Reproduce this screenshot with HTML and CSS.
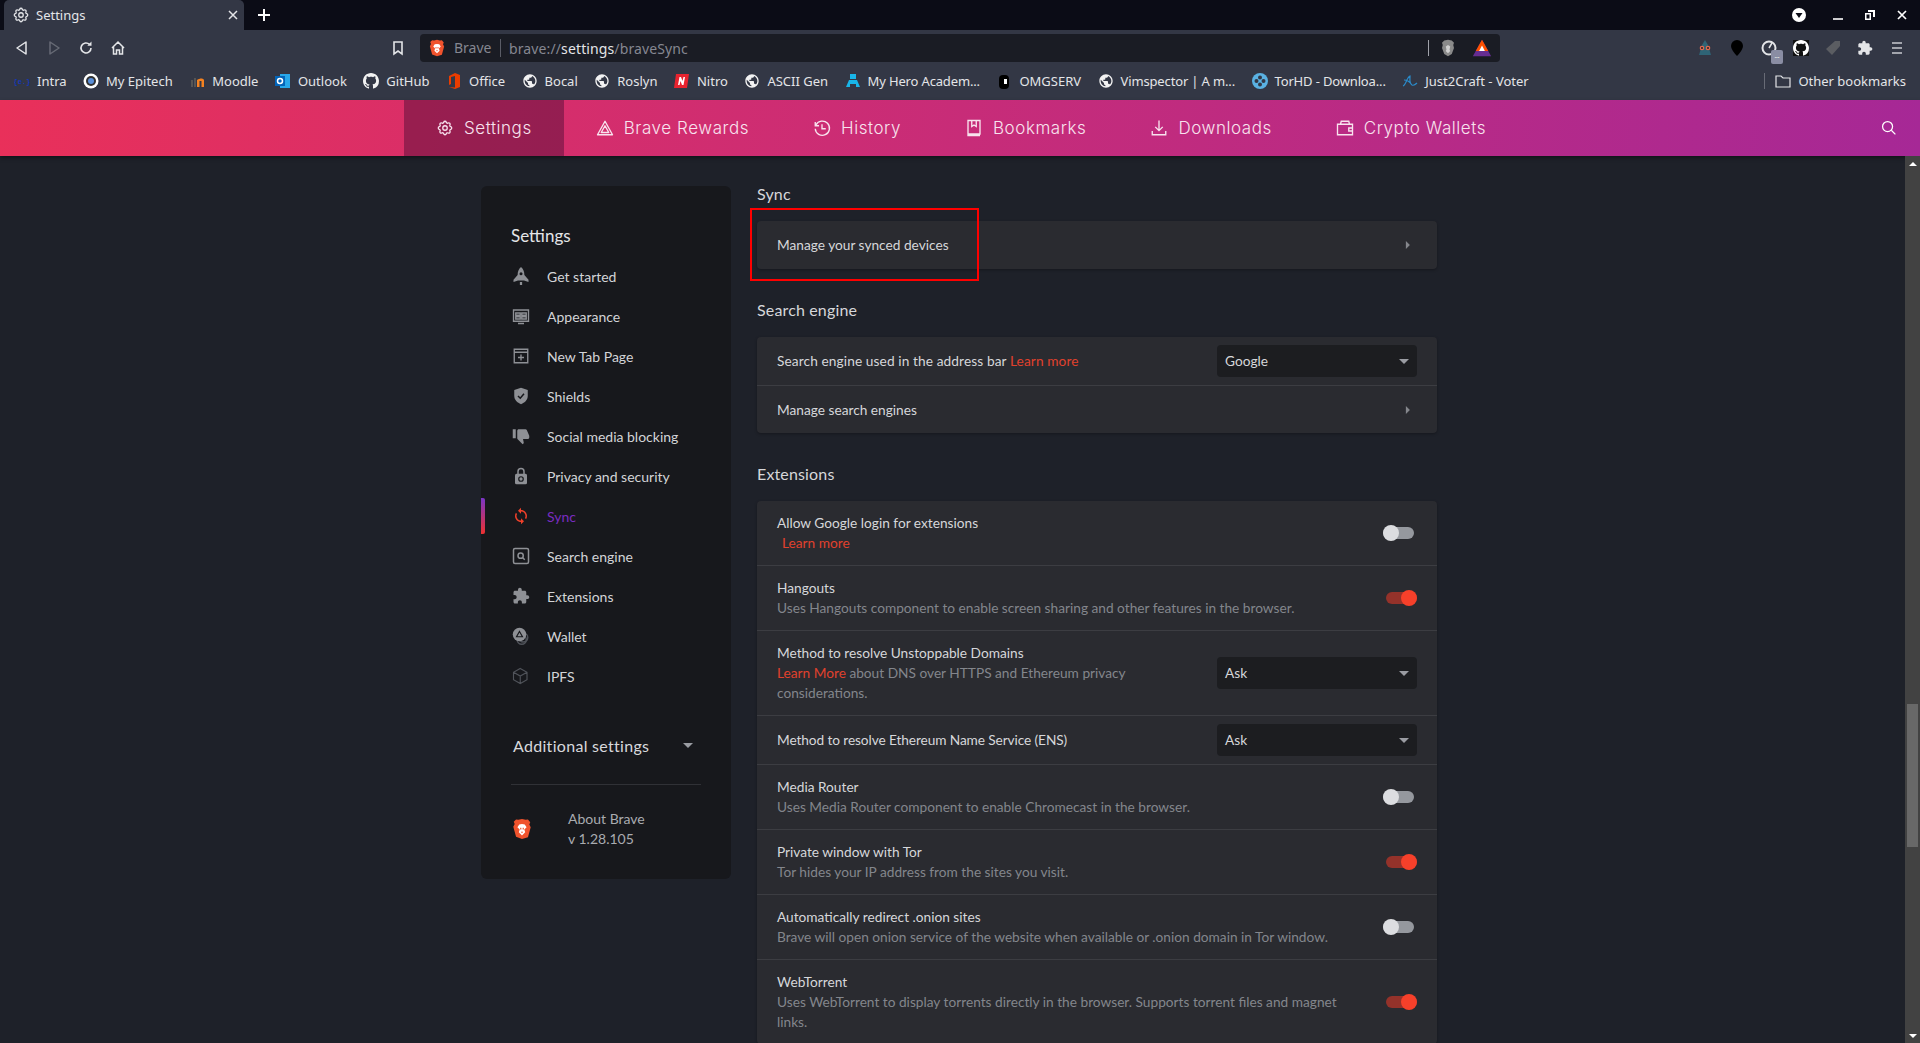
FILE: index.html
```html
<!DOCTYPE html>
<html lang="en">
<head>
    <meta charset="UTF-8">
    <title>Settings</title>
    <link rel="stylesheet" href="styles.css">
</head>
<body>
    <!-- shared icons -->
    <svg class="sprite" xmlns="http://www.w3.org/2000/svg">
        <symbol id="gear" viewBox="0 0 24 24"><path fill="none" stroke="currentColor" stroke-width="1.7" d="M10.325 4.317c.426-1.756 2.924-1.756 3.35 0a1.724 1.724 0 002.573 1.066c1.543-.94 3.31.826 2.37 2.37a1.724 1.724 0 001.065 2.572c1.756.426 1.756 2.924 0 3.35a1.724 1.724 0 00-1.066 2.573c.94 1.543-.826 3.31-2.37 2.37a1.724 1.724 0 00-2.572 1.065c-.426 1.756-2.924 1.756-3.35 0a1.724 1.724 0 00-2.573-1.066c-1.543.94-3.31-.826-2.37-2.37a1.724 1.724 0 00-1.065-2.572c-1.756-.426-1.756-2.924 0-3.35a1.724 1.724 0 001.066-2.573c-.94-1.543.826-3.31 2.37-2.37.996.608 2.296.07 2.572-1.065z"/><circle cx="12" cy="12" r="3" fill="none" stroke="currentColor" stroke-width="1.7"/></symbol>
        <symbol id="globe" viewBox="0 0 24 24"><circle cx="12" cy="12" r="10" fill="#333745"/><path fill="#f2f2f2" d="M12 2C6.48 2 2 6.48 2 12s4.48 10 10 10 10-4.48 10-10S17.52 2 12 2zm-1 17.93c-3.95-.49-7-3.85-7-7.93 0-.62.08-1.21.21-1.79L9 15v1c0 1.1.9 2 2 2v1.93zm6.9-2.54c-.26-.81-1-1.39-1.9-1.39h-1v-3c0-.55-.45-1-1-1H8v-2h2c.55 0 1-.45 1-1V7h2c1.1 0 2-.9 2-2v-.41c2.93 1.19 5 4.06 5 7.41 0 2.08-.8 3.97-2.1 5.39z"/></symbol>
        <symbol id="github" viewBox="0 0 16 16"><path fill="currentColor" d="M8 0C3.58 0 0 3.58 0 8c0 3.54 2.29 6.53 5.47 7.59.4.07.55-.17.55-.38 0-.19-.01-.82-.01-1.49-2.01.37-2.53-.49-2.69-.94-.09-.23-.48-.94-.82-1.13-.28-.15-.68-.52-.01-.53.63-.01 1.08.58 1.23.82.72 1.21 1.87.87 2.33.66.07-.52.28-.87.51-1.07-1.78-.2-3.64-.89-3.64-3.95 0-.87.31-1.59.82-2.15-.08-.2-.36-1.02.08-2.12 0 0 .67-.21 2.2.82.64-.18 1.32-.27 2-.27.68 0 1.36.09 2 .27 1.53-1.04 2.2-.82 2.2-.82.44 1.1.16 1.92.08 2.12.51.56.82 1.27.82 2.15 0 3.07-1.87 3.75-3.65 3.95.29.25.54.73.54 1.48 0 1.07-.01 1.93-.01 2.2 0 .21.15.46.55.38A8.013 8.013 0 0016 8c0-4.42-3.58-8-8-8z"/></symbol>
        <symbol id="puzzle" viewBox="0 0 24 24"><path fill="currentColor" d="M20.5 11H19V7c0-1.1-.9-2-2-2h-4V3.5C13 2.12 11.88 1 10.5 1S8 2.12 8 3.5V5H4c-1.1 0-1.99.9-1.99 2v3.8H3.5c1.49 0 2.7 1.21 2.7 2.7s-1.21 2.7-2.7 2.7H2V20c0 1.1.9 2 2 2h3.8v-1.5c0-1.49 1.21-2.7 2.7-2.7 1.49 0 2.7 1.21 2.7 2.7V22H17c1.1 0 2-.9 2-2v-4h1.5c1.38 0 2.5-1.12 2.5-2.5S21.88 11 20.5 11z"/></symbol>
        <symbol id="lion" viewBox="0 0 24 24"><path fill="#f0532d" d="M12 1l4 1 2.500-.5 2.500 3-1 2.500 1.500 3-3 11L12 23l-6.500-2.500-3-11L4 6.500 3 4l2.500-2.500L8 2z"/><path fill="#fff" d="M12 6.500l3 .5 2 3-2.500 2.500 1 3L12 19l-3.500-3.500 1-3L7 10l2-3z"/><path fill="#f0532d" d="M10 10.500h1.300v2H10zM12.700 10.500H14v2h-1.300zM10.700 15h2.600L12 16.500z"/></symbol>
        <symbol id="triangle" viewBox="0 0 24 24"><path fill="none" stroke="currentColor" stroke-width="1.800" stroke-linejoin="round" d="M12 3L22 21H2zM12 9l5 9H7z"/></symbol>
        <symbol id="chev" viewBox="0 0 6 10"><path fill="currentColor" d="M1 0l5 5-5 5z"/></symbol>
    </svg>

    <!-- tab strip -->
    <div class="tabstrip">
        <div class="tab">
            <svg class="tab-icon"><use href="#gear"/></svg>
            <span class="tab-title">Settings</span>
            <svg class="tab-close" viewBox="0 0 10 10"><path d="M1 1l8 8M9 1l-8 8" stroke="currentColor" stroke-width="1.500"/></svg>
        </div>
        <svg class="tab-new" viewBox="0 0 12 12"><path d="M6 0v12M0 6h12" stroke="#fff" stroke-width="2"/></svg>
        <div class="window-btns">
            <svg class="win win-menu" viewBox="0 0 14 14"><circle cx="7" cy="7" r="7" fill="#fff"/><path d="M3.500 5h7L7 10z" fill="#0b0c16"/></svg>
            <svg class="win" viewBox="0 0 12 12"><path d="M1 10h10" stroke="#fff" stroke-width="1.600"/></svg>
            <svg class="win" viewBox="0 0 12 12"><path d="M4 1h7v7H9V3H4zM1 4h6v7H1zM2.500 5.500v4h3v-4z" fill="#fff" fill-rule="evenodd"/></svg>
            <svg class="win" viewBox="0 0 12 12"><path d="M2 2l8 8M10 2l-8 8" stroke="#fff" stroke-width="1.700"/></svg>
        </div>
    </div>

    <!-- address bar row -->
    <div class="toolbar">
        <div class="tool-group">
            <svg class="tool" viewBox="0 0 16 16"><path d="M12 2v12L3 8z" fill="none" stroke="#e4e5e8" stroke-width="1.500" stroke-linejoin="round"/></svg>
            <svg class="tool" viewBox="0 0 16 16"><path d="M4 2v12l9-6z" fill="none" stroke="#676a75" stroke-width="1.500" stroke-linejoin="round"/></svg>
            <svg class="tool" viewBox="0 0 16 16"><path d="M13 8a5 5 0 1 1-1.500-3.600" fill="none" stroke="#e4e5e8" stroke-width="1.600"/><path d="M13.500 1.500v4.200H9.300z" fill="#e4e5e8"/></svg>
            <svg class="tool" viewBox="0 0 16 16"><path d="M2 8l6-6 6 6M3.500 7v7h3v-4h3v4h3V7" fill="none" stroke="#e4e5e8" stroke-width="1.500"/></svg>
        </div>
        <svg class="tool tool-mark" viewBox="0 0 16 16"><path d="M4 2h8v12l-4-3-4 3z" fill="none" stroke="#e4e5e8" stroke-width="1.600"/></svg>
        <div class="omnibox">
            <svg class="omni-lion"><use href="#lion"/></svg>
            <span class="omni-name">Brave</span>
            <span class="omni-url">brave://<b>settings</b>/braveSync</span>
            <span class="omni-sep"></span>
            <svg class="omni-shield" viewBox="0 0 24 24"><path fill="#8a8a8a" d="M12 1l5 1 3 3-1 3 1 4-3 8-5 3-5-3-3-8 1-4-1-3 3-3z"/><path fill="#d0d0d0" d="M12 8l3 2-1 4 1 2-3 3-3-3 1-2-1-4z"/></svg>
            <svg class="omni-bat" viewBox="0 0 24 24"><path fill="#662d91" d="M12 2l11 20H1z"/><path fill="#ff5000" d="M12 2l7.500 13.500h-15z"/><path fill="#fff" d="M12 9l3.500 6.500h-7z"/></svg>
        </div>
        <div class="ext-group">
            <svg class="tool" viewBox="0 0 16 16"><path d="M8 0l3 5 3 10H2L5 5z" fill="#2f6476"/><circle cx="5" cy="8" r="2.300" fill="#e2694f"/><circle cx="11" cy="8" r="2.300" fill="#e2694f"/><circle cx="5" cy="8" r="1" fill="#222"/><circle cx="11" cy="8" r="1" fill="#222"/></svg>
            <svg class="tool" viewBox="0 0 16 16"><path d="M8 0a6 6 0 0 1 6 6c0 4-6 10-6 10S2 10 2 6a6 6 0 0 1 6-6z" fill="#000"/></svg>
            <span class="ext-badged">
                <svg class="tool" viewBox="0 0 16 16"><circle cx="8" cy="8" r="6.500" fill="none" stroke="#e4e5e8" stroke-width="2"/><path d="M8 8l3-5" stroke="#e4e5e8" stroke-width="1.500"/></svg>
                <span class="ext-badge">--</span>
            </span>
            <svg class="tool tool-gh"><use href="#github"/></svg>
            <svg class="tool" viewBox="0 0 16 16"><path d="M10 1h5v5l-8 9-6-6z" fill="#5b5d62"/></svg>
            <svg class="tool tool-puzzle"><use href="#puzzle"/></svg>
            <svg class="tool" viewBox="0 0 16 16"><path d="M3 3h10M3 8h10M3 13h10" stroke="#c9cad0" stroke-width="1.700"/></svg>
        </div>
    </div>

    <!-- bookmarks -->
    <div class="bookmarks">
        <a class="bm"><svg viewBox="0 0 16 16"><text x="8" y="11" class="bm-intra">{e.}</text></svg>Intra</a>
        <a class="bm"><svg viewBox="0 0 16 16"><circle cx="8" cy="8" r="7.500" fill="#fff"/><circle cx="8" cy="8" r="5" fill="#333"/><circle cx="8" cy="8" r="3" fill="#5b8fd8"/></svg>My Epitech</a>
        <a class="bm"><svg viewBox="0 0 16 16"><path d="M2 14V7h2v7zM5 14V5h2v9z" fill="#555"/><path d="M8 14V7c3-2 6-2 7 0v7h-2.500V8h-2v6z" fill="#f58220"/></svg>Moodle</a>
        <a class="bm"><svg viewBox="0 0 16 16"><path d="M5 1h10v14H5z" fill="#28a8ea"/><rect x="0" y="3" width="10" height="10" fill="#0364b8"/><circle cx="5" cy="8" r="2.500" fill="none" stroke="#fff" stroke-width="1.500"/></svg>Outlook</a>
        <a class="bm"><svg class="bm-gh"><use href="#github"/></svg>GitHub</a>
        <a class="bm"><svg viewBox="0 0 16 16"><path d="M9 0l5 2v12l-5 2-6-2 6 .5V3L5 4v7l-2 1V3z" fill="#eb3c00"/></svg>Office</a>
        <a class="bm"><svg><use href="#globe"/></svg>Bocal</a>
        <a class="bm"><svg><use href="#globe"/></svg>Roslyn</a>
        <a class="bm"><svg viewBox="0 0 16 16"><path d="M2 1h13l-2 14H0z" fill="#e8232f"/><path d="M4 12l1.500-8H7l1.500 4L9.500 4H11l-1.500 8H8L6.500 8 5.500 12z" fill="#fff"/></svg>Nitro</a>
        <a class="bm"><svg><use href="#globe"/></svg>ASCII Gen</a>
        <a class="bm bm-tight"><svg viewBox="0 0 16 16"><path d="M5 1h6v5H5zM4 7h8l3 7h-4V11H5v3H1z" fill="#19b5e8"/></svg>My Hero Academ...</a>
        <a class="bm"><svg viewBox="0 0 16 16"><rect x="3" y="2" width="10" height="14" rx="4" fill="#000"/><rect x="8" y="6" width="3" height="5" fill="#fff"/></svg>OMGSERV</a>
        <a class="bm bm-tight"><svg><use href="#globe"/></svg>Vimspector | A m...</a>
        <a class="bm bm-tight"><svg viewBox="0 0 16 16"><circle cx="8" cy="8" r="8" fill="#5ab1e2"/><circle cx="8" cy="4.500" r="2" fill="#333745"/><circle cx="8" cy="11.500" r="2" fill="#333745"/><circle cx="4.500" cy="8" r="2" fill="#333745"/><circle cx="11.500" cy="8" r="2" fill="#333745"/></svg>TorHD - Downloa...</a>
        <a class="bm"><svg viewBox="0 0 16 16"><path d="M1 13C4 12 5 4 8 3c0 4-1 7 2 9 2 1 3 0 5-2M2 7c3 0 6 2 8 5" fill="none" stroke="#2a8ccc" stroke-width="1.200"/></svg>Just2Craft - Voter</a>
        <div class="bm-other">
            <span class="bm-sep"></span>
            <a class="bm"><svg viewBox="0 0 16 16"><path d="M1 3h5l2 2h7v9H1z" fill="none" stroke="#e4e5e8" stroke-width="1.200"/></svg>Other bookmarks</a>
        </div>
    </div>

    <!-- settings top nav -->
    <nav class="topnav">
        <a class="nav-item active"><svg><use href="#gear"/></svg>Settings</a>
        <a class="nav-item"><svg><use href="#triangle"/></svg>Brave Rewards</a>
        <a class="nav-item"><svg viewBox="0 0 24 24"><path d="M4 8a9.500 9.500 0 1 1-1 5M3 4v5h5M12 7v6h5" fill="none" stroke="currentColor" stroke-width="1.800"/></svg>History</a>
        <a class="nav-item"><svg viewBox="0 0 24 24"><path d="M4 20V2h16v18zM4 20v2h16M9 2v8l3-2 3 2V2" fill="none" stroke="currentColor" stroke-width="1.800"/></svg>Bookmarks</a>
        <a class="nav-item"><svg viewBox="0 0 24 24"><path d="M12 2v13M7 10.500l5 5 5-5M3 16v5h18v-5" fill="none" stroke="currentColor" stroke-width="1.800"/></svg>Downloads</a>
        <a class="nav-item"><svg viewBox="0 0 24 24"><path d="M2 7h20v14H2zM6 7l1-4h10l1 4M22 12h-5v4h5" fill="none" stroke="currentColor" stroke-width="1.800"/></svg>Crypto Wallets</a>
        <svg class="nav-search" viewBox="0 0 24 24"><circle cx="10.500" cy="10.500" r="8" fill="none" stroke="currentColor" stroke-width="2"/><path d="M16.500 16.500L23 23" stroke="currentColor" stroke-width="2"/></svg>
    </nav>

    <div class="page">
        <!-- left menu -->
        <aside class="sidebar">
            <h2 class="side-title">Settings</h2>
            <a class="side-item"><svg viewBox="0 0 24 24"><path d="M12 0c3 2.500 4.500 6 4.500 10.500L22 17v3l-6-2H8l-6 2v-3l5.500-6.500C7.500 6 9 2.500 12 0zM10.500 20h3v4h-3z" fill="currentColor"/><circle cx="12" cy="9" r="2" fill="#17181c"/></svg>Get started</a>
            <a class="side-item"><svg viewBox="0 0 24 24"><path d="M2 4h20v15H2zM8 22h8M5 8h6v3H5zM13 8h6v3h-6zM5 13h6v3H5zM13 13h6v3h-6z" fill="none" stroke="currentColor" stroke-width="1.800"/></svg>Appearance</a>
            <a class="side-item"><svg viewBox="0 0 24 24"><path d="M3 3h18v18H3zM3 7h18M12 10v8M8 14h8" fill="none" stroke="currentColor" stroke-width="1.800"/></svg>New Tab Page</a>
            <a class="side-item"><svg viewBox="0 0 24 24"><path d="M12 1l9 3v8c0 5-4 9-9 11-5-2-9-6-9-11V4z" fill="currentColor"/><path d="M8 12l3 3 5-6" fill="none" stroke="#17181c" stroke-width="2"/></svg>Shields</a>
            <a class="side-item"><svg viewBox="0 0 24 24"><g transform="translate(24 0) scale(-1 1)"><path fill="currentColor" d="M15 3H6c-.83 0-1.540.5-1.840 1.220l-3.020 7.050c-.09.23-.14.47-.14.730v2c0 1.100.9 2 2 2h6.310l-.95 4.570-.03.320c0 .41.17.79.44 1.060L9.830 23l6.590-6.590c.36-.36.58-.86.58-1.410V5c0-1.100-.9-2-2-2zm4 0v12h4V3h-4z"/></g></svg>Social media blocking</a>
            <a class="side-item"><svg viewBox="0 0 24 24"><path d="M8 10V6a4 4 0 0 1 8 0v4" fill="none" stroke="currentColor" stroke-width="2"/><rect x="4" y="9" width="16" height="14" rx="2" fill="currentColor"/><circle cx="12" cy="16" r="3" fill="none" stroke="#17181c" stroke-width="1.600"/></svg>Privacy and security</a>
            <a class="side-item side-active"><svg viewBox="2 0 20 24"><path fill="#f0402a" d="M12 4V1L8 5l4 4V6c3.310 0 6 2.690 6 6 0 1.010-.25 1.970-.7 2.800l1.460 1.460C19.540 15.030 20 13.570 20 12c0-4.420-3.580-8-8-8zm0 14c-3.310 0-6-2.690-6-6 0-1.010.25-1.970.7-2.800L5.240 7.740C4.460 8.970 4 10.430 4 12c0 4.420 3.580 8 8 8v3l4-4-4-4v3z"/></svg>Sync</a>
            <a class="side-item"><svg viewBox="0 0 24 24"><rect x="2" y="2" width="20" height="20" rx="2" fill="none" stroke="currentColor" stroke-width="2"/><circle cx="11.500" cy="11.500" r="3.500" fill="none" stroke="currentColor" stroke-width="2"/><path d="M14 14l3 3" stroke="currentColor" stroke-width="2"/></svg>Search engine</a>
            <a class="side-item"><svg><use href="#puzzle"/></svg>Extensions</a>
            <a class="side-item"><svg viewBox="0 0 24 24"><circle cx="15" cy="14" r="6" fill="none" stroke="#50535a" stroke-width="2"/><circle cx="13" cy="17" r="6" fill="none" stroke="#50535a" stroke-width="2"/><circle cx="10" cy="10" r="9" fill="currentColor"/><path d="M10 6l4 7H6z" fill="none" stroke="#17181c" stroke-width="1.500"/></svg>Wallet</a>
            <a class="side-item side-dim"><svg viewBox="0 0 24 24"><path d="M11 2l9 5v10l-9 5-9-5V7zM2 7l9 5 9-5M11 12v10" fill="none" stroke="currentColor" stroke-width="1.500"/></svg>IPFS</a>
            <div class="side-more">
                <span>Additional settings</span>
                <i class="caret"></i>
            </div>
            <div class="side-about">
                <svg class="about-lion"><use href="#lion"/></svg>
                <div class="about-text">About Brave<br>v 1.28.105</div>
            </div>
        </aside>

        <!-- settings sections -->
        <main class="content">
            <h3 class="sec-title first">Sync</h3>
            <div class="card">
                <div class="row row-link">
                    <span class="row-text">Manage your synced devices</span>
                    <svg class="chev"><use href="#chev"/></svg>
                </div>
                <div class="highlight"></div>
            </div>

            <h3 class="sec-title">Search engine</h3>
            <div class="card">
                <div class="row">
                    <span class="row-text row-search">Search engine used in the address bar <a class="learn">Learn more</a></span>
                    <div class="select">Google<i class="caret"></i></div>
                </div>
                <div class="row row-link">
                    <span class="row-text">Manage search engines</span>
                    <svg class="chev"><use href="#chev"/></svg>
                </div>
            </div>

            <h3 class="sec-title">Extensions</h3>
            <div class="card">
                <div class="row row-tall">
                    <div class="row-text">Allow Google login for extensions<div><a class="learn learn-in">Learn more</a></div></div>
                    <span class="toggle"></span>
                </div>
                <div class="row row-tall">
                    <div class="row-text">Hangouts<div class="sub">Uses Hangouts component to enable screen sharing and other features in the browser.</div></div>
                    <span class="toggle on"></span>
                </div>
                <div class="row row-tall">
                    <div class="row-text row-narrow">Method to resolve Unstoppable Domains<div class="sub"><a class="learn">Learn More</a> about DNS over HTTPS and Ethereum privacy considerations.</div></div>
                    <div class="select">Ask<i class="caret"></i></div>
                </div>
                <div class="row">
                    <span class="row-text row-ens">Method to resolve Ethereum Name Service (ENS)</span>
                    <div class="select">Ask<i class="caret"></i></div>
                </div>
                <div class="row row-tall">
                    <div class="row-text">Media Router<div class="sub">Uses Media Router component to enable Chromecast in the browser.</div></div>
                    <span class="toggle"></span>
                </div>
                <div class="row row-tall">
                    <div class="row-text">Private window with Tor<div class="sub">Tor hides your IP address from the sites you visit.</div></div>
                    <span class="toggle on"></span>
                </div>
                <div class="row row-tall">
                    <div class="row-text">Automatically redirect .onion sites<div class="sub">Brave will open onion service of the website when available or .onion domain in Tor window.</div></div>
                    <span class="toggle"></span>
                </div>
                <div class="row row-tall">
                    <div class="row-text row-narrow-wide">WebTorrent<div class="sub">Uses WebTorrent to display torrents directly in the browser. Supports torrent files and magnet links.</div></div>
                    <span class="toggle on"></span>
                </div>
            </div>
        </main>

        <!-- page scrollbar -->
        <div class="scrollbar">
            <i class="sb-up"></i>
            <div class="sb-thumb"></div>
            <i class="sb-down"></i>
        </div>
    </div>
</body>
</html>
```

FILE: styles.css
```css
/* General page styling */
html, body {
    margin: 0;
    height: 1043px;
    overflow: hidden;
}

body {
    display: flex;
    flex-direction: column;
    background-color: #1e2129;
    font-family: "Lato", sans-serif;
    color: #d6d7da;
}

a {
    color: inherit;
    text-decoration: none;
}

.sprite {
    display: none;
}

/* Tab strip */
.tabstrip {
    flex: 0 0 30px;
    display: flex;
    align-items: center;
    background-color: #0b0c16;
    font-family: "Noto Sans", sans-serif;
    font-size: 13px;
}

.tab {
    box-sizing: border-box;
    width: 240px;
    height: 30px;
    margin-left: 4px;
    padding: 0 8px;
    display: flex;
    align-items: center;
    background-color: #333745;
    border-radius: 5px 5px 0 0;
    color: #e4e5e8;
}

.tab-icon {
    width: 18px;
    height: 18px;
    margin-right: 6px;
    color: #e4e5e8;
}

.tab-title {
    flex: 1;
}

.tab-close {
    width: 10px;
    height: 10px;
    margin-right: -2px;
}

.tab-new {
    width: 12px;
    height: 12px;
    margin-left: 14px;
}

.window-btns {
    margin-left: auto;
    display: flex;
    align-items: center;
    margin-right: 12px;
    gap: 20px;
}

.win {
    width: 12px;
    height: 12px;
}

.win-menu {
    width: 14px;
    height: 14px;
    margin-right: 6px;
}

/* Address bar row */
.toolbar {
    flex: 0 0 36px;
    display: flex;
    align-items: flex-start;
    background-color: #333745;
    font-family: "Noto Sans", sans-serif;
    font-size: 14px;
}

.tool-group,
.ext-group {
    display: flex;
    align-items: center;
    height: 28px;
    margin-top: 4px;
    gap: 16px;
}

.tool-group {
    margin-left: 14px;
}

.tool {
    width: 16px;
    height: 16px;
    flex: none;
    color: #e4e5e8;
}

.tool-mark {
    margin: 10px 14px 0 264px;
}

.omnibox {
    box-sizing: border-box;
    width: 1080px;
    height: 28px;
    margin-top: 4px;
    padding: 0 0 0 8px;
    display: flex;
    align-items: center;
    background-color: #1a1c24;
    border-radius: 4px;
    color: #858791;
}

.omni-lion {
    width: 18px;
    height: 18px;
    margin-right: 8px;
}

.omni-name {
    width: 46px;
    height: 18px;
    line-height: 18px;
    border-right: 1px solid #5a5c66;
    margin-right: 8px;
}

.omni-url {
    letter-spacing: 0.12px;
}

.omni-url b {
    font-weight: 400;
    color: #e4e5e8;
}

.omni-sep {
    width: 1px;
    height: 16px;
    background-color: #a0a2aa;
    margin-left: auto;
}

.omni-shield {
    width: 18px;
    height: 20px;
    margin-left: 10px;
}

.omni-bat {
    width: 20px;
    height: 20px;
    margin: 0 8px 0 15px;
}

.ext-group {
    margin-left: auto;
    margin-right: 15px;
}

.ext-badged {
    position: relative;
    display: flex;
}

.ext-badge {
    position: absolute;
    left: 10px;
    top: 10px;
    width: 12px;
    height: 14px;
    background-color: #8a8da3;
    border-radius: 2px;
    color: #e4e5e8;
    font-size: 8px;
    line-height: 13px;
    text-align: center;
}

.tool-gh {
    background-color: #111;
    color: #fff;
}

/* Bookmarks bar */
.bookmarks {
    flex: 0 0 34px;
    box-sizing: border-box;
    display: flex;
    align-items: center;
    padding: 0 0 4px 14px;
    gap: 16.5px;
    background-color: #333745;
    font-family: "Noto Sans", sans-serif;
    font-size: 13px;
    color: #e4e5e8;
    white-space: nowrap;
}

.bm {
    display: flex;
    align-items: center;
    gap: 7px;
}

.bm-tight {
    letter-spacing: -0.15px;
}

.bm svg {
    width: 16px;
    height: 16px;
    flex: none;
}

.bm-gh {
    color: #f2f2f2;
}

.bm-intra {
    font-family: "Liberation Mono", monospace;
    font-size: 7px;
    font-weight: 700;
    text-anchor: middle;
    fill: #1438b8;
}

.bm-other {
    margin-left: auto;
    margin-right: 14px;
    display: flex;
    align-items: center;
    gap: 10px;
}

.bm-sep {
    width: 1px;
    height: 16px;
    background-color: #686b76;
}

/* Gradient top nav */
.topnav {
    flex: 0 0 56px;
    display: flex;
    align-items: stretch;
    padding-left: 404px;
    background: linear-gradient(94deg, #e9305a 0%, #a62896 100%);
    box-shadow: 0 2px 4px rgba(0, 0, 0, 0.4);
    font-family: "Inter", sans-serif;
    font-size: 17px;
    font-weight: 300;
    letter-spacing: 0.55px;
    color: #f8e3ee;
    position: relative;
}

.nav-item {
    display: flex;
    align-items: center;
    gap: 10px;
    padding: 0 32px 1px;
}

.nav-item svg {
    width: 18px;
    height: 18px;
}

.nav-item.active {
    background-color: rgba(70, 10, 50, 0.45);
}

.nav-search {
    width: 15px;
    height: 15px;
    margin: 20px 24px 0 auto;
    color: #fff;
}

/* Body layout */
.page {
    flex: 1;
    min-height: 0;
    display: flex;
    align-items: flex-start;
    padding-left: 481px;
    position: relative;
}

/* Left menu */
.sidebar {
    box-sizing: border-box;
    width: 250px;
    height: 693px;
    margin-top: 30px;
    padding-top: 39px;
    background-color: #17181c;
    border-radius: 6px;
    font-size: 14px;
    position: relative;
}

.side-title {
    margin: 0 0 9px 30px;
    font-size: 17px;
    font-weight: 400;
    line-height: 22px;
    color: #e4e5e8;
}

.side-item {
    height: 40px;
    display: flex;
    align-items: center;
    padding-left: 31px;
    color: #d3d4d7;
}

.side-item svg {
    width: 18px;
    height: 18px;
    margin-right: 17px;
    flex: none;
    color: #8e9095;
}

.side-active {
    color: #7a2cc0;
    position: relative;
}

.side-active::before {
    content: "";
    position: absolute;
    left: 0;
    top: 2px;
    width: 4px;
    height: 36px;
    background: linear-gradient(180deg, #7a35c8, #ee3130);
    border-radius: 0 2px 2px 0;
}

.side-dim svg {
    color: #50535a;
}

.side-more {
    margin: 29px 30px 0 32px;
    height: 40px;
    display: flex;
    align-items: center;
    justify-content: space-between;
    font-size: 16px;
    letter-spacing: 0.3px;
    color: #d8d9dc;
}

.side-more .caret {
    margin-right: 8px;
}

.side-about {
    margin: 19px 30px 0;
    padding-top: 24px;
    border-top: 1px solid #303136;
    display: flex;
    align-items: center;
    color: #a9abb0;
}

.about-lion {
    width: 22px;
    height: 22px;
    margin: 0 35px 0 0;
}

.about-text {
    line-height: 20px;
}

.caret {
    width: 0;
    height: 0;
    border-left: 5px solid transparent;
    border-right: 5px solid transparent;
    border-top: 5px solid #9a9ca2;
    flex: none;
}

/* Settings sections */
.content {
    width: 680px;
    margin-left: 26px;
    font-size: 13.7px;
}

.sec-title {
    margin: 32px 0 18px;
    font-size: 16px;
    font-weight: 400;
    letter-spacing: 0.15px;
    line-height: 18px;
    color: #d6d7da;
}

.sec-title.first {
    margin-top: 29px;
}

.card {
    background-color: #2a2b30;
    border-radius: 4px;
    box-shadow: 0 1px 3px rgba(0, 0, 0, 0.3);
    position: relative;
}

.highlight {
    position: absolute;
    left: -7px;
    top: -13px;
    box-sizing: border-box;
    width: 229px;
    height: 73px;
    border: 2px solid #f00;
}

.row {
    min-height: 32px;
    padding: 8px 20px;
    display: flex;
    align-items: center;
    justify-content: space-between;
    line-height: 20px;
}

.row + .row {
    border-top: 1px solid #3c3d42;
}

.row + .row-link {
    min-height: 31px;
}

.row-tall {
    padding-top: 12px;
    padding-bottom: 12px;
}

.row-text {
    color: #d6d7da;
}

.row-search {
    letter-spacing: 0.1px;
}

.row-ens {
    letter-spacing: -0.1px;
}

.row-narrow {
    width: 380px;
}

.row-narrow-wide {
    width: 580px;
}

.sub {
    font-size: 13.7px;
    color: #83868c;
}

.learn {
    color: #e0412d;
}

.learn-in {
    margin-left: 5px;
}

.chev {
    width: 5px;
    height: 8px;
    margin-right: 7px;
    color: #85878c;
}

.select {
    box-sizing: border-box;
    width: 200px;
    height: 32px;
    padding: 0 8px;
    display: flex;
    align-items: center;
    justify-content: space-between;
    background-color: #1c1d20;
    border-radius: 4px;
    color: #d6d7da;
}

/* Toggles */
.toggle {
    position: relative;
    width: 31px;
    height: 12px;
    margin-right: 3px;
    background-color: #95989e;
    border-radius: 6px;
    flex: none;
}

.toggle::after {
    content: "";
    position: absolute;
    left: 0;
    top: -2px;
    width: 16px;
    height: 16px;
    background-color: #dcdde0;
    border-radius: 50%;
}

.toggle.on {
    margin-right: 0;
    background-color: #94322a;
}

.toggle.on::after {
    left: 15px;
    background-color: #f6402a;
}

/* Scrollbar */
.scrollbar {
    position: absolute;
    right: 0;
    top: 0;
    width: 15px;
    height: 887px;
    background-color: #424242;
}

.sb-thumb {
    position: absolute;
    left: 2px;
    top: 548px;
    width: 11px;
    height: 143px;
    background-color: #686868;
}

.sb-up,
.sb-down {
    position: absolute;
    left: 4px;
    width: 0;
    height: 0;
    border-left: 4px solid transparent;
    border-right: 4px solid transparent;
}

.sb-up {
    top: 6px;
    border-bottom: 4px solid #fff;
}

.sb-down {
    bottom: 5px;
    border-top: 4px solid #fff;
}
```
